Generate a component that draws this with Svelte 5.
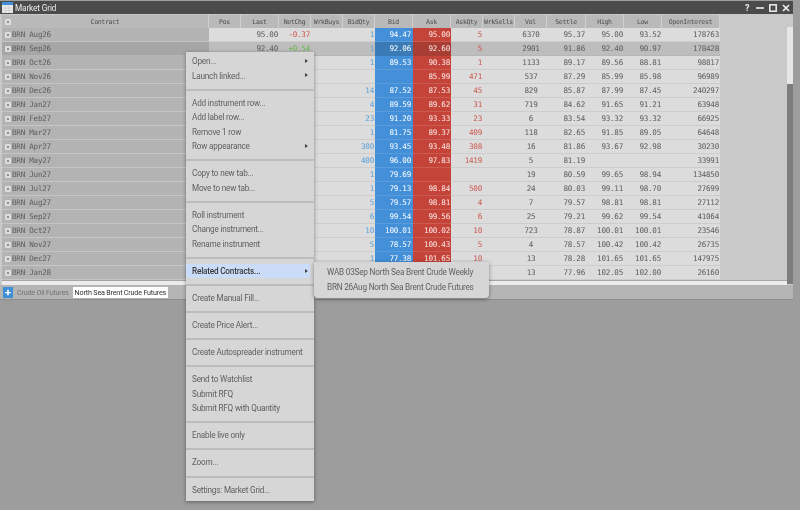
<script>
  const columns = ['Contract', 'Pos', 'Last', 'NetChg', 'WrkBuys', 'BidQty', 'Bid', 'Ask', 'AskQty', 'WrkSells', 'Vol', 'Settle', 'High', 'Low', 'OpenInterest'];

  // contract, last, netChg, bidQty, bid, ask, askQty, vol, settle, high, low, oi
  const rows = [
    ['BRN Aug26', '95.00', '-0.37', '1', '94.47', '95.00', '5', '6370', '95.37', '95.00', '93.52', '178763'],
    ['BRN Sep26', '92.40', '+0.54', '1', '92.06', '92.60', '5', '2901', '91.86', '92.40', '90.97', '178428'],
    ['BRN Oct26', '', '', '1', '89.53', '90.38', '1', '1133', '89.17', '89.56', '88.81', '98817'],
    ['BRN Nov26', '', '', '', '', '85.99', '471', '537', '87.29', '85.99', '85.98', '96989'],
    ['BRN Dec26', '', '', '14', '87.52', '87.53', '45', '829', '85.87', '87.99', '87.45', '240297'],
    ['BRN Jan27', '', '', '4', '89.59', '89.62', '31', '719', '84.62', '91.65', '91.21', '63948'],
    ['BRN Feb27', '', '', '23', '91.20', '93.33', '23', '6', '83.54', '93.32', '93.32', '66925'],
    ['BRN Mar27', '', '', '1', '81.75', '89.37', '409', '118', '82.65', '91.85', '89.05', '64648'],
    ['BRN Apr27', '', '', '300', '93.45', '93.48', '308', '16', '81.86', '93.67', '92.98', '30230'],
    ['BRN May27', '', '', '400', '96.00', '97.83', '1419', '5', '81.19', '', '', '33991'],
    ['BRN Jun27', '', '', '1', '79.69', '', '', '19', '80.59', '99.65', '98.94', '134850'],
    ['BRN Jul27', '', '', '1', '79.13', '98.84', '500', '24', '80.03', '99.11', '98.70', '27699'],
    ['BRN Aug27', '', '', '5', '79.57', '98.81', '4', '7', '79.57', '98.81', '98.81', '27112'],
    ['BRN Sep27', '', '', '6', '99.54', '99.56', '6', '25', '79.21', '99.62', '99.54', '41064'],
    ['BRN Oct27', '', '', '10', '100.01', '100.02', '10', '723', '78.87', '100.01', '100.01', '23546'],
    ['BRN Nov27', '', '', '5', '78.57', '100.43', '5', '4', '78.57', '100.42', '100.42', '26735'],
    ['BRN Dec27', '', '', '1', '77.38', '101.65', '10', '13', '78.28', '101.65', '101.65', '147975'],
    ['BRN Jan28', '', '', '', '', '', '', '13', '77.96', '102.05', '102.00', '26160']
  ];

  const menu = [
    [{ label: 'Open...', sub: true }, { label: 'Launch linked...', sub: true }],
    [{ label: 'Add instrument row...' }, { label: 'Add label row...' }, { label: 'Remove 1 row' }, { label: 'Row appearance', sub: true }],
    [{ label: 'Copy to new tab...' }, { label: 'Move to new tab...' }],
    [{ label: 'Roll instrument' }, { label: 'Change instrument...' }, { label: 'Rename instrument' }],
    [{ label: 'Related Contracts...', sub: true, active: true }],
    [{ label: 'Create Manual Fill...' }],
    [{ label: 'Create Price Alert...' }],
    [{ label: 'Create Autospreader instrument' }],
    [{ label: 'Send to Watchlist' }, { label: 'Submit RFQ' }, { label: 'Submit RFQ with Quantity' }],
    [{ label: 'Enable live only' }],
    [{ label: 'Zoom...' }],
    [{ label: 'Settings: Market Grid...' }]
  ];

  const related = ['WAB 03Sep North Sea Brent Crude Weekly', 'BRN 26Aug North Sea Brent Crude Futures'];
</script>

<div class="desktop">
  <div class="window">
    <div class="titlebar">
      <svg class="app-icon" width="11" height="11" viewBox="0 0 11 11">
        <rect width="11" height="11" fill="#e8e8e8" />
        <rect width="11" height="3" fill="#3f8fd8" />
        <path d="M0 6h11M0 8.500h11M3.500 3v8M7 3v8" stroke="#c8c8c8" stroke-width=".6" />
      </svg>
      <span class="title">Market Grid</span>
      <div class="controls">
        <span class="help">?</span>
        <svg width="8" height="8" viewBox="0 0 8 8"><path d="M0 4h8" stroke="#eee" stroke-width="1.600" /></svg>
        <svg width="8" height="8" viewBox="0 0 8 8"><rect x=".8" y=".8" width="6.400" height="6.400" fill="none" stroke="#eee" stroke-width="1.500" /></svg>
        <svg width="8" height="8" viewBox="0 0 8 8"><path d="M1 1l6 6M7 1l-6 6" stroke="#eee" stroke-width="1.700" /></svg>
      </div>
    </div>

    <div class="body">
      <div class="grid">
        {#each columns as col, i}
          <div class="head" class:first={i === 0}>
            {#if i === 0}<span class="expander"></span>{/if}
            {col}
          </div>
        {/each}

        {#each rows as r, i}
          <div class="cell contract" class:sel={i === 1}><span class="expander"></span>{r[0]}</div>
          <div class="cell" class:sel={i === 1}></div>
          <div class="cell num" class:sel={i === 1}>{r[1]}</div>
          <div class="cell num" class:sel={i === 1} class:down={r[2].startsWith('-')} class:up={r[2].startsWith('+')}>{r[2]}</div>
          <div class="cell" class:sel={i === 1}></div>
          <div class="cell num qty-bid" class:sel={i === 1}>{r[3]}</div>
          <div class="cell num bid" class:sel={i === 1}>{r[4]}</div>
          <div class="cell num ask" class:sel={i === 1}>{r[5]}</div>
          <div class="cell num qty-ask" class:sel={i === 1}>{r[6]}</div>
          <div class="cell" class:sel={i === 1}></div>
          <div class="cell mid" class:sel={i === 1}>{r[7]}</div>
          <div class="cell num" class:sel={i === 1}>{r[8]}</div>
          <div class="cell num" class:sel={i === 1}>{r[9]}</div>
          <div class="cell num" class:sel={i === 1}>{r[10]}</div>
          <div class="cell num" class:sel={i === 1}>{r[11]}</div>
        {/each}
      </div>
      <div class="vscroll"><div class="thumb"></div></div>
    </div>

    <div class="hscroll"></div>

    <div class="tabs">
      <span class="add">+</span>
      <span class="tab">Crude Oil Futures</span>
      <span class="tab current">North Sea Brent Crude Futures</span>
    </div>
  </div>

  <div class="menu main-menu">
    {#each menu as group}
      <div class="group">
        {#each group as item}
          <div class="item" class:active={item.active}>
            {item.label}
            {#if item.sub}<span class="arrow"></span>{/if}
          </div>
        {/each}
      </div>
    {/each}
  </div>

  <div class="menu sub-menu">
    {#each related as label}
      <div class="item">{label}</div>
    {/each}
  </div>
</div>

<style>
  :global(body) {
    margin: 0;
    background: #9d9d9d;
  }

  .desktop {
    position: relative;
    width: 800px;
    height: 510px;
    overflow: hidden;
    background: #9d9d9d;
    font-family: Roboto, "Liberation Sans", sans-serif;
    filter: blur(0.35px);
  }

  .window {
    width: 793px;
    height: 300px;
    box-sizing: border-box;
    background: #c9c9c9;
    border-top: 1px solid #9d9d9d;
    border-bottom: 1px solid #8c8c8c;
    display: flex;
    flex-direction: column;
  }

  .titlebar {
    height: 13px;
    flex: none;
    background: #4b4b4b;
    display: flex;
    align-items: center;
    padding: 0 3px 0 2px;
    color: #eee;
    font-size: 8.200px;
    letter-spacing: -0.1px;
  }

  .app-icon {
    margin-right: 2px;
  }

  .controls {
    margin-left: auto;
    display: flex;
    align-items: center;
    gap: 5px;
  }

  .help {
    font-weight: bold;
    font-size: 9px;
    width: 6px;
  }

  .body {
    flex: none;
    height: 266px;
    padding: 1px 0 0 2px;
    display: flex;
    justify-content: space-between;
    box-sizing: border-box;
  }

  .grid {
    display: grid;
    grid-template-columns: 207px 32px 38px 32px 32px 32px 38px 38px 32px 32px 32px 39px 38px 38px 58px;
    grid-auto-rows: 14px;
    grid-template-rows: 13px;
    font-family: "DejaVu Sans Mono", monospace;
    font-size: 7.600px;
    letter-spacing: -0.25px;
    color: #5c5c5c;
    align-content: start;
  }

  .head {
    background: #b9b9b9;
    border-right: 1px solid #cfcfcf;
    display: flex;
    align-items: center;
    justify-content: center;
    font-size: 6.500px;
    letter-spacing: -0.3px;
    color: #4e4e4e;
    position: relative;
    box-sizing: border-box;
  }

  .head .expander {
    position: absolute;
    left: 3px;
    top: 3.500px;
  }

  .cell {
    background: #dcdcdc;
    border-bottom: 1px solid #cdcdcd;
    box-sizing: border-box;
    display: flex;
    align-items: center;
    white-space: nowrap;
  }

  .cell.sel {
    background: #bdbdbd;
    border-bottom-color: #b5b5b5;
  }

  .num {
    justify-content: flex-end;
    padding-right: 1px;
  }

  .mid {
    justify-content: center;
  }

  .contract {
    background: #b3b3b3;
    border-bottom-color: #c6c6c6;
    padding-left: 3px;
    gap: 1px;
  }

  .contract.sel {
    background: #a6a6a6;
    border-bottom-color: #b3b3b3;
  }

  .expander {
    width: 6px;
    height: 6px;
    flex: none;
    box-sizing: border-box;
    background: #8f8f8f;
    border: 2px solid #dcdcdc;
    border-radius: 1px;
  }

  .bid {
    background: #4390d9;
    border-bottom-color: #5a9cdb;
    color: #fff;
    padding-right: 2px;
  }

  .bid.sel {
    background: #3a7ab5;
    border-bottom-color: #3a7ab5;
  }

  .ask {
    background: #c5443a;
    border-bottom-color: #cb5a50;
    color: #fbe9e7;
    padding-right: 1px;
  }

  .ask.sel {
    background: #a83d33;
    border-bottom-color: #a83d33;
  }

  .qty-bid {
    color: #5a9fd8;
    padding-right: 1px;
  }

  .qty-ask {
    color: #c9584e;
    padding-right: 1px;
  }

  .down {
    color: #d2544a;
  }

  .up {
    color: #6cba4f;
  }

  .vscroll {
    width: 6px;
    height: 257px;
    margin-top: 12px;
    background: #7c7c7c;
  }

  .thumb {
    height: 57px;
    background: #e6e6e6;
  }

  .hscroll {
    height: 5px;
    flex: none;
    margin: 0 6px 0 2px;
    background: #ececec;
    border-top: 1px solid #a5a5a5;
    box-sizing: border-box;
  }

  .tabs {
    flex: 1;
    background: #b5b5b5;
    display: flex;
    align-items: center;
    padding-left: 3px;
    font-size: 7.200px;
    letter-spacing: -0.2px;
    color: #747474;
  }

  .add {
    width: 10px;
    height: 11px;
    background: #3f8fd8;
    color: #fff;
    font-weight: bold;
    font-size: 11px;
    line-height: 11px;
    text-align: center;
    margin-right: 4px;
  }

  .tab {
    height: 11px;
    line-height: 11px;
    margin-right: 4px;
    white-space: nowrap;
  }

  .current {
    background: #fff;
    color: #333;
    padding: 0 2px;
  }

  .menu {
    position: absolute;
    box-sizing: border-box;
    background: #d6d6d6;
    box-shadow: 0 1px 4px rgba(0, 0, 0, 0.4);
    font-size: 8.200px;
    letter-spacing: -0.2px;
    color: #5f5f5f;
  }

  .main-menu {
    left: 186px;
    top: 52px;
    width: 128px;
  }

  .sub-menu {
    left: 314px;
    top: 262px;
    width: 175px;
    border-radius: 0 0 4px 4px;
    padding: 3px 0;
  }

  .group {
    padding: 5px 0 5.600px;
    border-bottom: 2px solid #bcbcbc;
  }

  .group:first-child {
    padding-top: 2px;
  }

  .group:last-child {
    padding-bottom: 4px;
    border-bottom: none;
  }

  .item {
    position: relative;
    height: 14.500px;
    line-height: 14.500px;
    padding-left: 6px;
    white-space: nowrap;
  }

  .sub-menu .item {
    height: 15px;
    line-height: 15px;
    padding-left: 13px;
  }

  .item.active {
    background: #cbdcf8;
    color: #3a3a3a;
    font-weight: 500;
    margin-right: 4px;
  }

  .arrow {
    position: absolute;
    right: 6px;
    top: 50%;
    margin-top: -2.500px;
    border-left: 3px solid #444;
    border-top: 2.500px solid transparent;
    border-bottom: 2.500px solid transparent;
  }

  .item.active .arrow {
    right: 2px;
  }
</style>
